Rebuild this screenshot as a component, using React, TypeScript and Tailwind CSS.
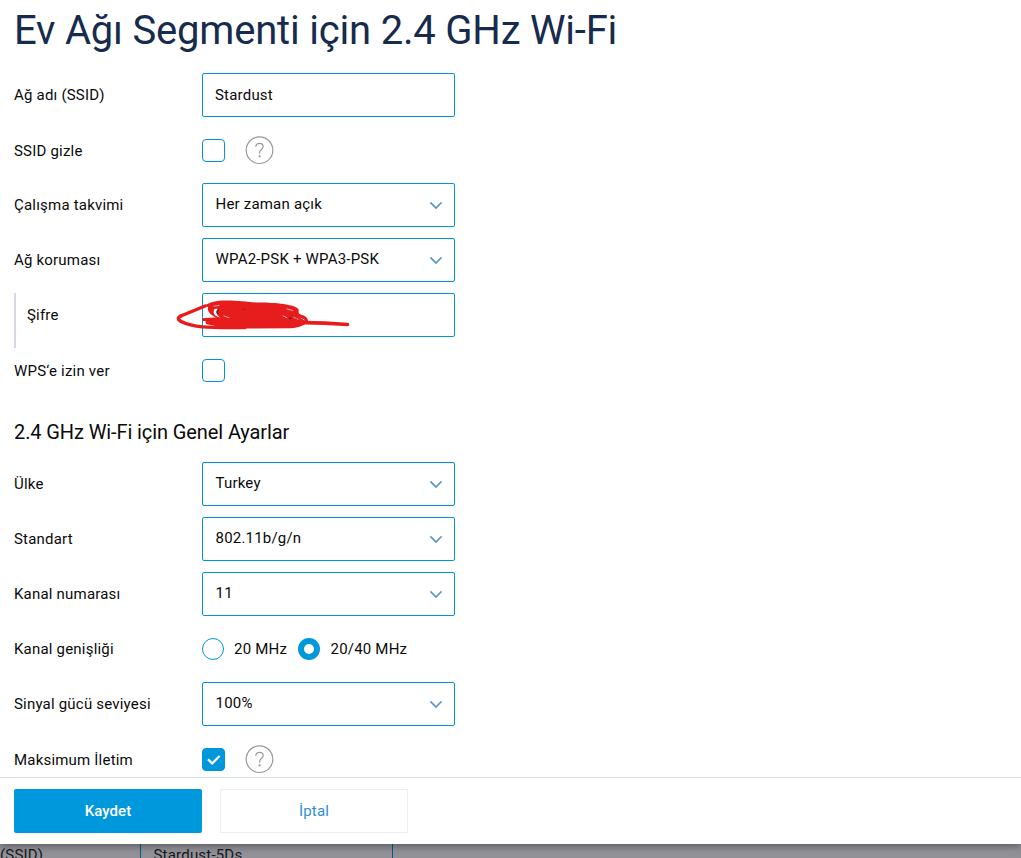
import type { ReactNode } from "react";

function Row({ label, low = false, nested = false, children }: { label: string; low?: boolean; nested?: boolean; children: ReactNode }) {
  return (
    <div className={`flex h-[55px] ${nested ? "border-l-2 border-[#d5d9e6]" : ""}`}>
      <div className={`${nested ? "w-[186px] pl-[11px]" : "w-[188px]"} shrink-0 leading-[44px] ${low ? "pt-px" : ""}`}>{label}</div>
      {children}
    </div>
  );
}

function Select({ value }: { value: string }) {
  return (
    <div className="flex h-11 w-[253px] items-start justify-between rounded-[2px] border border-[#0095d6] pl-[12.5px] pr-3 leading-10 tracking-[0.2px]">
      <span>{value}</span>
      <svg className="mt-[17px]" width="13" height="10" viewBox="0 0 13 10" fill="none" stroke="#5b95cf" strokeWidth="1.7">
        <path d="M1.4 1.3 7 7 12.6 1.3" />
      </svg>
    </div>
  );
}

function Checkbox({ checked = false }: { checked?: boolean }) {
  return (
    <div className={`mt-[11px] flex h-[23px] w-[23px] items-center justify-center rounded-[4px] border border-[#0095d6] ${checked ? "bg-[#0098dc]" : "bg-white"}`}>
      {checked && (
        <svg width="15" height="11" viewBox="0 0 15 11" fill="none" stroke="white" strokeWidth="2.3">
          <path d="M2 5.3 6.2 9.3 13.6 2" />
        </svg>
      )}
    </div>
  );
}

function Help() {
  return (
    <svg className="ml-5 mt-2" width="29" height="29" viewBox="0 0 29 29" fill="none" stroke="#999999">
      <circle cx="14.5" cy="14.2" r="13.3" strokeWidth="1.2" />
      <path d="M10.8 10.7C10.8 8.5 12.4 7.3 14.5 7.3S18.2 8.6 18.2 10.6C18.2 13.3 14.6 13.4 14.6 16.8V17.5" strokeWidth="1.2" />
      <circle cx="14.6" cy="20.4" r="1.1" fill="#999999" stroke="none" />
    </svg>
  );
}

function Scribble() {
  return (
    <svg className="absolute -left-[32px] -top-[8px]" width="190" height="60" viewBox="0 0 190 60" fill="none" stroke="#e71d1d" strokeWidth="3.5" strokeLinecap="round" strokeLinejoin="round">
      <path fill="#e71d1d" stroke="none" d="M34 21C40 17 46 15.5 56 15.5 70 15.5 80 17.5 90 17.5 105 17.5 125 19.5 128.5 24 129 27 127.5 28 131 29.8 135 30.5 138 33 138 36 136 40 128 43 121 43.3L72 43.5C56 43 44 41 36 39L35.5 36H33C31.5 35 32 33 34 33L46 32.5C41 30 37 27 38 22Z" />
      <path d="M35 21 12 30.5C8 32 7 34 11 36.5 25 43.5 43 42.5 75 42.5" />
      <path strokeWidth="3.7" d="M134 37.6 155 38.2 177.5 39.5" />
      <path fill="#ffffff" stroke="none" d="M44.5 24 48 23.7C46 25.5 45.5 29 50 32.6 45 31.5 42 28 44.5 24Z" />
      <path stroke="#f8b9b9" strokeWidth="0.9" d="M44 21.2 49 20.4M54 31 59 32.6M117 24 123 25.6M113 30.8 117 32.8M124 32.5 128 34.2M131 33.2 134 34.8" />
      <path stroke="#252938" strokeWidth="1.1" d="M48.6 25C46.6 25.4 46.4 27.6 48 28.6M119.5 33.1 120.8 33.4" />
      <path stroke="#252938" strokeWidth="0.6" d="M73 24.5 75 24.3M126 33.6 126.6 33.9M132 34 132.3 34.2" />
    </svg>
  );
}

export default function App() {
  return (
    <div className="flex h-[858px] w-[1021px] flex-col overflow-hidden bg-[#919197] font-['Roboto',sans-serif] text-[15px] tracking-[0.2px] text-[#0a0a0a]">
      <div className="relative flex h-[844px] shrink-0 flex-col bg-white shadow-[0_2px_8px_rgba(0,0,0,0.4)]">
        <main className="h-[777px] overflow-hidden px-3.5">
          <h1 className="h-[73px] whitespace-nowrap pt-[3px] text-[40px] leading-[56px] tracking-[-0.2px] text-[#172b4d]">Ev Ağı Segmenti için 2.4 GHz Wi-Fi</h1>
          <Row label="Ağ adı (SSID)">
            <div className="h-11 w-[253px] rounded-[2px] border border-[#0095d6] px-3 leading-[42px]">Stardust</div>
          </Row>
          <Row label="SSID gizle" low><Checkbox /><Help /></Row>
          <Row label="Çalışma takvimi"><Select value="Her zaman açık" /></Row>
          <Row label="Ağ koruması"><Select value="WPA2-PSK + WPA3-PSK" /></Row>
          <Row label="Şifre" nested>
            <div className="relative h-11 w-[253px]">
              <div className="h-11 rounded-[2px] border border-[#0095d6]" />
              <Scribble />
            </div>
          </Row>
          <Row label="WPS‘e izin ver" low><Checkbox /></Row>
          <h2 className="h-[59px] pt-[15px] text-[20px] leading-7 tracking-[-0.1px]">2.4 GHz Wi-Fi için Genel Ayarlar</h2>
          <Row label="Ülke"><Select value="Turkey" /></Row>
          <Row label="Standart"><Select value="802.11b/g/n" /></Row>
          <Row label="Kanal numarası"><Select value="11" /></Row>
          <Row label="Kanal genişliği">
            <div className="flex h-11 items-center">
              <span className="h-[22px] w-[22px] rounded-full border border-[#0095d6]" />
              <span className="ml-2.5 w-[64px]">20 MHz</span>
              <span className="h-[22px] w-[22px] rounded-full border-[6px] border-[#0098dc]" />
              <span className="ml-[10.5px]">20/40 MHz</span>
            </div>
          </Row>
          <Row label="Sinyal gücü seviyesi"><Select value="100%" /></Row>
          <Row label="Maksimum İletim" low><Checkbox checked /><Help /></Row>
        </main>
        <footer className="flex h-[67px] gap-[18px] border-t border-[#d5dfe8] px-3.5 pt-[11px]">
          <button className="h-11 w-[188px] rounded-[2px] bg-[#0098dc] font-medium tracking-[0.05px] text-white">Kaydet</button>
          <button className="h-11 w-[188px] border border-[#eeeeee] bg-white text-[#2d8fd3]">İptal</button>
        </footer>
      </div>
      <div className="flex h-[14px] shrink-0 overflow-hidden leading-[22px] text-[#17171a]">
        <div className="w-[140px]">(SSID)</div>
        <div className="w-[253px] border-x border-[#075d82] pl-[12.5px]">Stardust-5Ds</div>
      </div>
    </div>
  );
}
